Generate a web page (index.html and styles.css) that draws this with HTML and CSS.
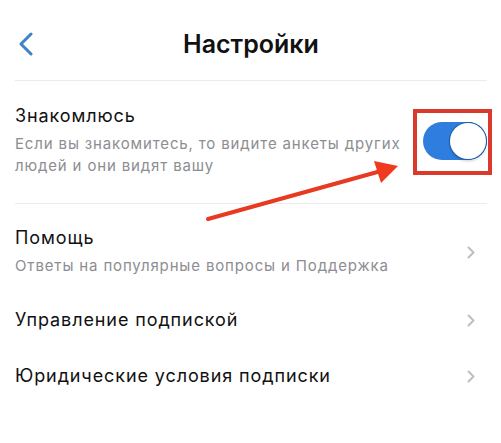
FILE: index.html
```html
<!DOCTYPE html>
<html lang="ru">
<head>
    <meta charset="UTF-8">
    <meta name="viewport" content="width=device-width, initial-scale=1.0">
    <title>Настройки</title>
    <link rel="stylesheet" href="styles.css">
</head>
<body>
    <div class="page">
        <header class="topbar">
            <a class="back" href="#">
                <svg width="15" height="24" viewBox="0 0 15 24"><path d="M13 2 L3 12 L13 22" fill="none" stroke="#3f83c6" stroke-width="3" stroke-linecap="round" stroke-linejoin="round"/></svg>
            </a>
            <h1 class="title">Настройки</h1>
            <span></span>
        </header>

        <div class="row row-toggle">
            <div class="row-text">
                <div class="row-title">Знакомлюсь</div>
                <div class="row-sub">Если вы знакомитесь, то видите анкеты других людей и они видят вашу</div>
            </div>
            <div class="toggle"><span class="knob"></span></div>
        </div>

        <div class="row row-help">
            <div class="row-text">
                <div class="row-title">Помощь</div>
                <div class="row-sub">Ответы на популярные вопросы и Поддержка</div>
            </div>
            <svg class="chevron" width="8" height="13" viewBox="0 0 8 13"><path d="M1.5 1.5 L6.5 6.5 L1.5 11.5" fill="none" stroke="#bdbdc2" stroke-width="2" stroke-linecap="round" stroke-linejoin="round"/></svg>
        </div>

        <div class="row row-plain">
            <div class="row-title">Управление подпиской</div>
            <svg class="chevron" width="8" height="13" viewBox="0 0 8 13"><path d="M1.5 1.5 L6.5 6.5 L1.5 11.5" fill="none" stroke="#bdbdc2" stroke-width="2" stroke-linecap="round" stroke-linejoin="round"/></svg>
        </div>

        <div class="row row-plain">
            <div class="row-title">Юридические условия подписки</div>
            <svg class="chevron" width="8" height="13" viewBox="0 0 8 13"><path d="M1.5 1.5 L6.5 6.5 L1.5 11.5" fill="none" stroke="#bdbdc2" stroke-width="2" stroke-linecap="round" stroke-linejoin="round"/></svg>
        </div>
    </div>

    <!-- пометки поверх скриншота -->
    <svg class="marks" width="501" height="443" viewBox="0 0 501 443">
        <rect x="415" y="111" width="75" height="62" fill="none" stroke="#d93a2b" stroke-width="4"/>
        <line x1="208" y1="219" x2="381" y2="171" stroke="#e63a22" stroke-width="4" stroke-linecap="round"/>
        <polygon points="398,166 374,161 381,183" fill="#f03a1e"/>
    </svg>
</body>
</html>
```

FILE: styles.css
```css
body {
    margin: 0;
    background: #fff;
    font-family: Inter, "Liberation Sans", Arial, sans-serif;
    color: #111;
}

.page {
    margin: 0 14px 0 15px;
}

.topbar {
    display: grid;
    grid-template-columns: 1fr auto 1fr;
    align-items: center;
    padding: 29px 0 21px;
    border-bottom: 1px solid #ebebee;
}

.back {
    display: flex;
    padding-left: 3px;
}

.title {
    margin: 0;
    font-size: 25px;
    line-height: 30px;
    font-weight: 600;
    color: #111;
}

.row {
    display: flex;
    align-items: center;
    justify-content: space-between;
}

.row-toggle {
    padding: 24px 0 26px;
    border-bottom: 1px solid #ebebee;
}

.row-toggle .row-text {
    width: 402px;
}

.row-help {
    padding: 23px 0 15px;
}

.row-plain {
    padding: 17px 0;
}

.row-title {
    font-size: 18px;
    line-height: 22px;
    letter-spacing: 0.9px;
}

.row-sub {
    margin-top: 6px;
    font-size: 15px;
    line-height: 22px;
    letter-spacing: 0.85px;
    color: #8d8d92;
}

.chevron {
    margin-right: 12px;
}

.toggle {
    width: 64px;
    height: 38px;
    border-radius: 19px;
    background: #2f7ddf;
    display: flex;
    justify-content: flex-end;
    align-items: center;
    padding: 0 1px;
    box-sizing: border-box;
}

.knob {
    width: 36px;
    height: 36px;
    border-radius: 50%;
    background: #fff;
    box-shadow: 0 0 0 1px #1d5ba8, 0 2px 3px rgba(0, 0, 0, 0.2);
}

.marks {
    position: absolute;
    left: 0;
    top: 0;
    pointer-events: none;
}
```
